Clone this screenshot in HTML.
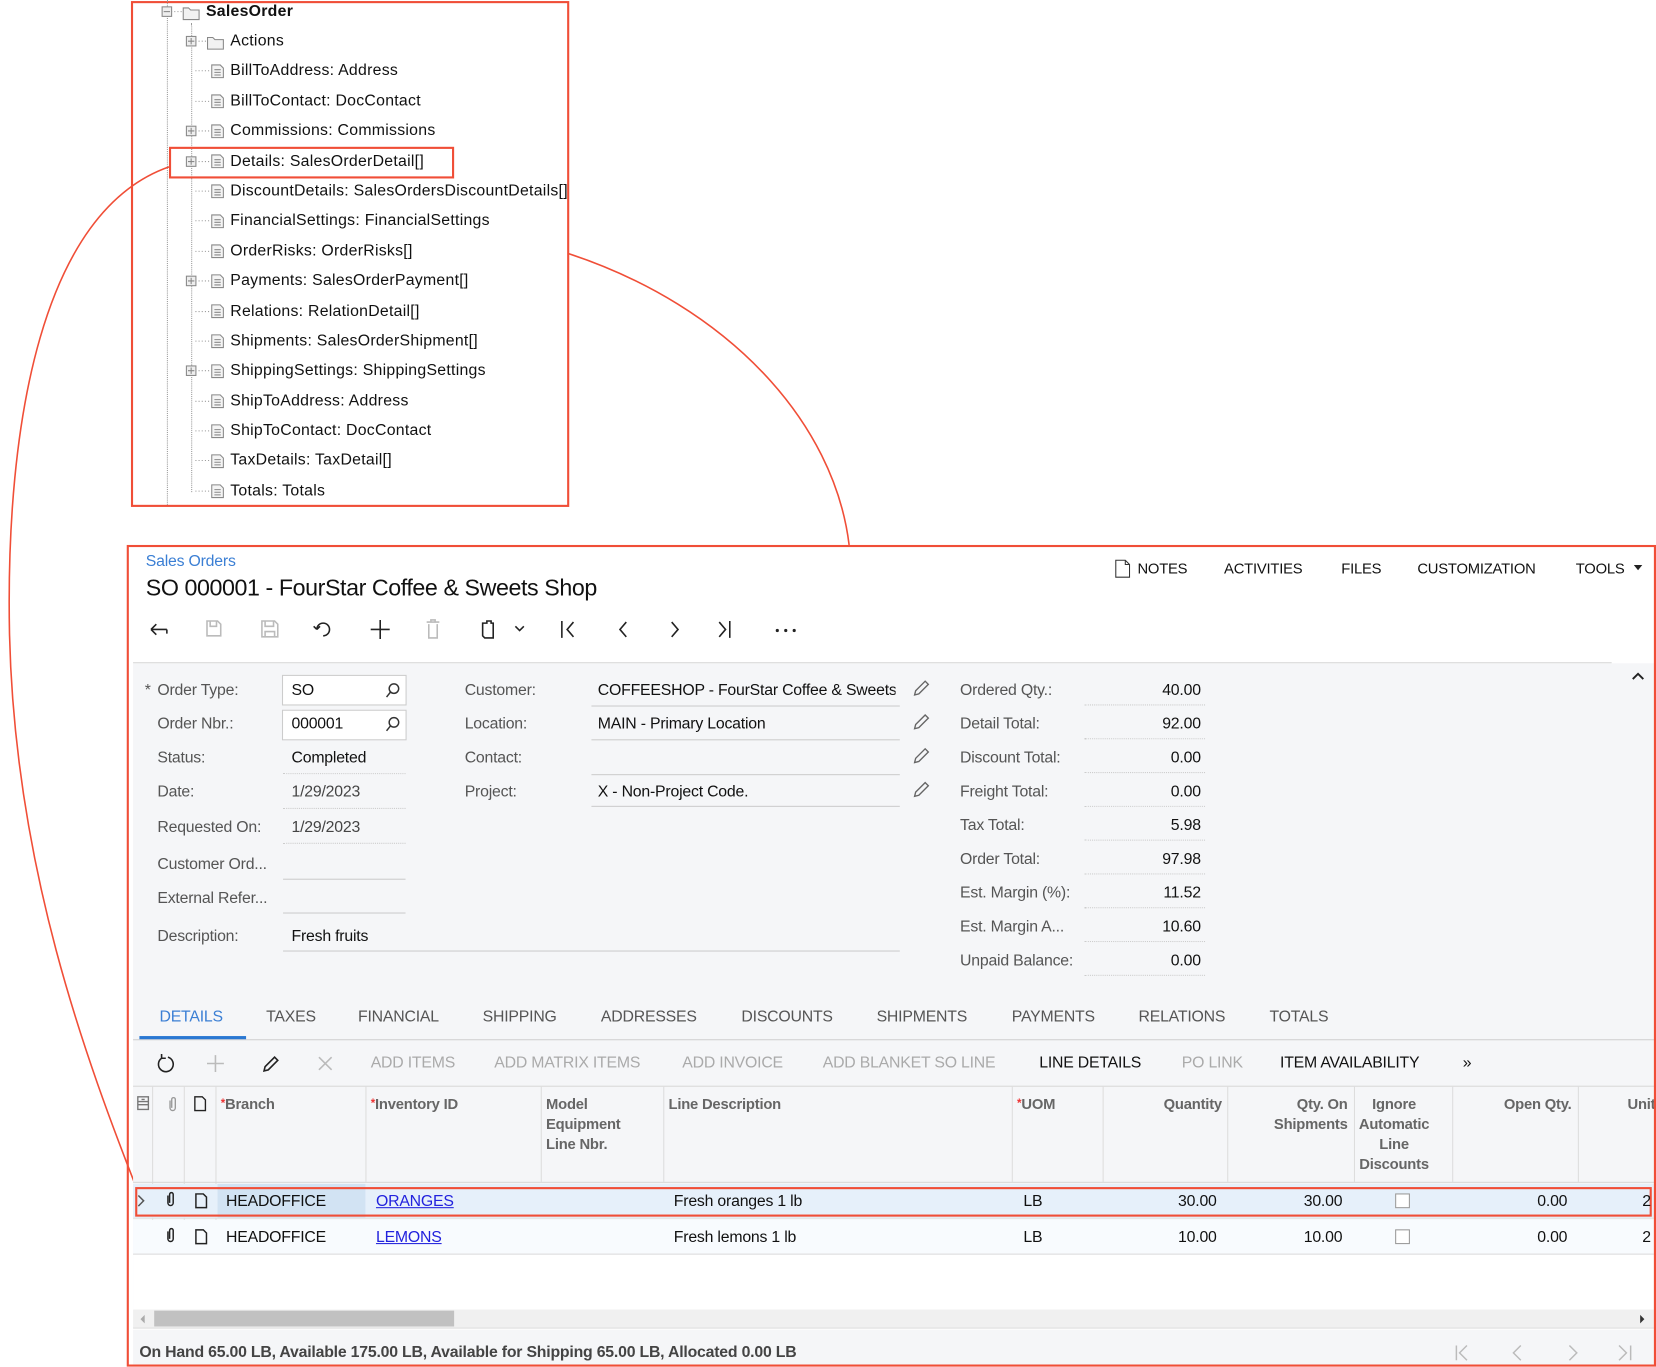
<!DOCTYPE html>
<html><head><meta charset="utf-8">
<style>
html,body{margin:0;padding:0;background:#fff;width:1656px;height:1366px;overflow:hidden}
#w{position:absolute;left:0;top:0;width:1568px;height:1294px;transform:scale(1.05612);transform-origin:0 0;font-family:"Liberation Sans",sans-serif;color:#111}
.t{position:absolute;line-height:18px;font-size:15px;white-space:nowrap;letter-spacing:-0.2px}
.tr{letter-spacing:0.25px}
.a{position:absolute}
.lb{color:#555}
.g{color:#aaa}
.h{font-weight:bold;color:#666;font-size:14px;line-height:19px}
.r{text-align:right}
.dl{position:absolute;border-bottom:1px dotted #ccc}
.ul{position:absolute;border-bottom:1px solid #ccc}
.vl{position:absolute;width:1px;background:#ddd}
</style></head><body><div id="w">

<!-- TREE -->
<div class="a" style="left:124px;top:1px;width:411px;height:475px;border:2px solid #f04e37"></div>
<div class="a" style="left:158px;top:0;height:478px;border-left:1px dotted #999"></div>
<div class="a" style="left:181px;top:22px;height:444px;border-left:1px dotted #999"></div>
<div class="a" style="left:160px;top:139px;width:266px;height:26px;border:2px solid #f04e37"></div>

<svg class="a" style="left:0;top:0" width="1568" height="1294">
<g fill="none" stroke="#f04e37" stroke-width="1.5">
<path d="M160,158 C 40,200 5,400 9,600 C 14,820 80,1000 134,1137"/>
<path d="M538,240 C 690,290 790,400 804,516"/>
</g>
<g stroke="#999" stroke-dasharray="1,2" stroke-width="1">
<path d="M162,11H172M185,39H196M185,67H198M185,96H198M185,124H198M185,153H198M185,181H198M185,209H198M185,238H198M185,266H198M185,295H198M185,323H198M185,351H198M185,380H198M185,408H198M185,436H198M185,465H198"/>
</g>
<g fill="#eee" stroke="#888">
<rect x="153.5" y="6.5" width="9" height="9"/><path d="M155,11H161" />
<rect x="176.5" y="34.5" width="9" height="9"/><path d="M178,39H184M181,36V42"/>
<rect x="176.5" y="119.5" width="9" height="9"/><path d="M178,124H184M181,121V127"/>
<rect x="176.5" y="148.5" width="9" height="9"/><path d="M178,153H184M181,150V156"/>
<rect x="176.5" y="261.5" width="9" height="9"/><path d="M178,266H184M181,263V269"/>
<rect x="176.5" y="346.5" width="9" height="9"/><path d="M178,351H184M181,348V354"/>
</g>
<g fill="#f2f2f2" stroke="#888">
<path d="M173.5,7.5h5l2,2h8v9h-15z"/>
<path d="M196.5,35.5h5l2,2h8v9h-15z"/>
</g>
<g fill="#f4f4f4" stroke="#888" id="docs">
<path d="M200.5,61.5h8l3,3v9h-11z M203,66h6M203,68.5h6M203,71h6"/>
</g>
<use href="#docs" y="28.4"/><use href="#docs" y="56.8"/><use href="#docs" y="85.2"/><use href="#docs" y="113.6"/><use href="#docs" y="142"/><use href="#docs" y="170.4"/><use href="#docs" y="198.8"/><use href="#docs" y="227.2"/><use href="#docs" y="255.6"/><use href="#docs" y="284"/><use href="#docs" y="312.4"/><use href="#docs" y="340.8"/><use href="#docs" y="369.2"/><use href="#docs" y="397.6"/>
</svg>

<div class="t tr" style="left:195px;top:2px;font-weight:bold">SalesOrder</div>
<div class="t tr" style="left:218px;top:30px">Actions</div>
<div class="t tr" style="left:218px;top:58px">BillToAddress: Address</div>
<div class="t tr" style="left:218px;top:87px">BillToContact: DocContact</div>
<div class="t tr" style="left:218px;top:115px">Commissions: Commissions</div>
<div class="t tr" style="left:218px;top:144px">Details: SalesOrderDetail[]</div>
<div class="t tr" style="left:218px;top:172px">DiscountDetails: SalesOrdersDiscountDetails[]</div>
<div class="t tr" style="left:218px;top:200px">FinancialSettings: FinancialSettings</div>
<div class="t tr" style="left:218px;top:229px">OrderRisks: OrderRisks[]</div>
<div class="t tr" style="left:218px;top:257px">Payments: SalesOrderPayment[]</div>
<div class="t tr" style="left:218px;top:286px">Relations: RelationDetail[]</div>
<div class="t tr" style="left:218px;top:314px">Shipments: SalesOrderShipment[]</div>
<div class="t tr" style="left:218px;top:342px">ShippingSettings: ShippingSettings</div>
<div class="t tr" style="left:218px;top:371px">ShipToAddress: Address</div>
<div class="t tr" style="left:218px;top:399px">ShipToContact: DocContact</div>
<div class="t tr" style="left:218px;top:427px">TaxDetails: TaxDetail[]</div>
<div class="t tr" style="left:218px;top:456px">Totals: Totals</div>

<!-- MAIN PANEL -->
<div class="a" style="left:126px;top:628px;width:1440px;height:612px;background:#f5f6f8"></div>
<div class="a" style="left:126px;top:1188px;width:1440px;height:52px;background:#fff"></div>
<div class="a" style="left:126px;top:627px;width:1400px;height:1px;background:#d8d8d8"></div>
<div class="a" style="left:126px;top:1259px;width:1440px;height:33px;background:#f5f6f8"></div>

<div class="t" style="left:138px;top:523px;color:#3b7fd4">Sales Orders</div>
<div class="t" style="left:138px;top:544px;font-size:22px;line-height:26px;letter-spacing:-0.4px">SO 000001 - FourStar Coffee &amp; Sweets Shop</div>

<svg class="a" style="left:1055px;top:529px" width="16" height="19"><path d="M1.5,1.5h9l4,4v12h-13z M10.5,1.5v4h4" fill="#fff" stroke="#333"/></svg>
<div class="t" style="left:1077px;top:529px;font-size:14px">NOTES</div>
<div class="t" style="left:1159px;top:529px;font-size:14px">ACTIVITIES</div>
<div class="t" style="left:1270px;top:529px;font-size:14px">FILES</div>
<div class="t" style="left:1342px;top:529px;font-size:14px">CUSTOMIZATION</div>
<div class="t" style="left:1492px;top:529px;font-size:14px">TOOLS</div>
<svg class="a" style="left:1547px;top:535px" width="10" height="6"><path d="M0,0H8L4,5z" fill="#222"/></svg>

<!-- toolbar icons -->
<svg class="a" style="left:130px;top:580px" width="650" height="32" fill="none" stroke-width="1.5">
<g stroke="#222"><path d="M13,16H28M13,16l5,-5M13,16l5,5M28,16v4"/></g>
<g stroke="#bbb"><path d="M66,8h10l3,3v11h-13z M69,8v5h6v-5"/><path d="M118,8h12l3,3v12h-15z M121,8v5h8v-5 M121,23v-5h9v5"/><path d="M274,9h12M278,9v-2h4v2 M276,11v13h8v-13"/></g>
<g stroke="#222"><path d="M170,16a6,6 0 1 1 6,6 M170,16l-3,-3M170,16l3,-3"/><path d="M230,7v18M221,16h18"/><path d="M327,10h4v-2h4v2h2v14h-8l-2,-2z"/><path d="M358,13l4,4l4,-4"/><path d="M402,8v16M413,9l-6,7l6,7"/><path d="M463,9l-6,7l6,7"/><path d="M506,9l6,7l-6,7"/><path d="M551,9l6,7l-6,7M561,8v16"/></g>
<g fill="#222" stroke="none"><circle cx="606" cy="17" r="1.5"/><circle cx="614" cy="17" r="1.5"/><circle cx="622" cy="17" r="1.5"/></g>
</svg>
<svg class="a" style="left:1544px;top:636px" width="14" height="10"><path d="M2,7l5,-5l5,5" fill="none" stroke="#222" stroke-width="1.8"/></svg>

<!-- form left -->
<div class="t" style="left:137px;top:645px;color:#555">*</div>
<div class="t lb" style="left:149px;top:645px">Order Type:</div>
<div class="t lb" style="left:149px;top:677px">Order Nbr.:</div>
<div class="t lb" style="left:149px;top:709px">Status:</div>
<div class="t lb" style="left:149px;top:741px">Date:</div>
<div class="t lb" style="left:149px;top:775px">Requested On:</div>
<div class="t lb" style="left:149px;top:810px">Customer Ord...</div>
<div class="t lb" style="left:149px;top:842px">External Refer...</div>
<div class="t lb" style="left:149px;top:878px">Description:</div>
<div class="a" style="left:267px;top:639px;width:116px;height:27px;background:#fff;border:1px solid #ccc"></div>
<div class="a" style="left:267px;top:672px;width:116px;height:27px;background:#fff;border:1px solid #ccc"></div>
<svg class="a" style="left:364px;top:645px" width="16" height="50" fill="none" stroke="#333" stroke-width="1.4"><circle cx="9" cy="7" r="4.5"/><path d="M6,10l-4,5"/><circle cx="9" cy="39" r="4.5"/><path d="M6,42l-4,5"/></svg>
<div class="t" style="left:276px;top:645px">SO</div>
<div class="t" style="left:276px;top:677px">000001</div>
<div class="t" style="left:276px;top:709px">Completed</div>
<div class="t" style="left:276px;top:741px;color:#444">1/29/2023</div>
<div class="t" style="left:276px;top:775px;color:#444">1/29/2023</div>
<div class="t" style="left:276px;top:878px">Fresh fruits</div>
<div class="dl" style="left:268px;top:732px;width:116px"></div>
<div class="dl" style="left:268px;top:765px;width:116px"></div>
<div class="dl" style="left:268px;top:798px;width:116px"></div>
<div class="ul" style="left:268px;top:832px;width:116px"></div>
<div class="ul" style="left:268px;top:864px;width:116px"></div>
<div class="ul" style="left:268px;top:900px;width:584px"></div>

<!-- form middle -->
<div class="t lb" style="left:440px;top:645px">Customer:</div>
<div class="t lb" style="left:440px;top:677px">Location:</div>
<div class="t lb" style="left:440px;top:709px">Contact:</div>
<div class="t lb" style="left:440px;top:741px">Project:</div>
<div class="t" style="left:566px;top:645px;width:282px;overflow:hidden">COFFEESHOP - FourStar Coffee &amp; Sweets Shop</div>
<div class="t" style="left:566px;top:677px">MAIN - Primary Location</div>
<div class="t" style="left:566px;top:741px">X - Non-Project Code.</div>
<div class="ul" style="left:560px;top:668px;width:292px"></div>
<div class="ul" style="left:560px;top:700px;width:292px"></div>
<div class="ul" style="left:560px;top:733px;width:292px"></div>
<div class="ul" style="left:560px;top:763px;width:292px"></div>
<svg class="a" style="left:863px;top:643px" width="18" height="116" fill="none" stroke="#666" stroke-width="1.3">
<path d="M3,15l1,-4l9,-9l3,3l-9,9z"/><path d="M3,47l1,-4l9,-9l3,3l-9,9z"/><path d="M3,79l1,-4l9,-9l3,3l-9,9z"/><path d="M3,111l1,-4l9,-9l3,3l-9,9z"/></svg>

<!-- form right -->
<div class="t lb" style="left:909px;top:645px">Ordered Qty.:</div>
<div class="t lb" style="left:909px;top:677px">Detail Total:</div>
<div class="t lb" style="left:909px;top:709px">Discount Total:</div>
<div class="t lb" style="left:909px;top:741px">Freight Total:</div>
<div class="t lb" style="left:909px;top:773px">Tax Total:</div>
<div class="t lb" style="left:909px;top:805px">Order Total:</div>
<div class="t lb" style="left:909px;top:837px">Est. Margin (%):</div>
<div class="t lb" style="left:909px;top:869px">Est. Margin A...</div>
<div class="t lb" style="left:909px;top:901px">Unpaid Balance:</div>
<div class="t r" style="left:1037px;width:100px;top:645px">40.00</div>
<div class="t r" style="left:1037px;width:100px;top:677px">92.00</div>
<div class="t r" style="left:1037px;width:100px;top:709px">0.00</div>
<div class="t r" style="left:1037px;width:100px;top:741px">0.00</div>
<div class="t r" style="left:1037px;width:100px;top:773px">5.98</div>
<div class="t r" style="left:1037px;width:100px;top:805px">97.98</div>
<div class="t r" style="left:1037px;width:100px;top:837px">11.52</div>
<div class="t r" style="left:1037px;width:100px;top:869px">10.60</div>
<div class="t r" style="left:1037px;width:100px;top:901px">0.00</div>
<div class="dl" style="left:1027px;top:667px;width:114px"></div>
<div class="dl" style="left:1027px;top:699px;width:114px"></div>
<div class="dl" style="left:1027px;top:731px;width:114px"></div>
<div class="dl" style="left:1027px;top:763px;width:114px"></div>
<div class="dl" style="left:1027px;top:795px;width:114px"></div>
<div class="dl" style="left:1027px;top:827px;width:114px"></div>
<div class="dl" style="left:1027px;top:859px;width:114px"></div>
<div class="dl" style="left:1027px;top:891px;width:114px"></div>
<div class="dl" style="left:1027px;top:923px;width:114px"></div>

<!-- tabs -->
<div class="t" style="left:151px;top:954px;color:#3b7fd4">DETAILS</div>
<div class="t lb" style="left:252px;top:954px">TAXES</div>
<div class="t lb" style="left:339px;top:954px">FINANCIAL</div>
<div class="t lb" style="left:457px;top:954px">SHIPPING</div>
<div class="t lb" style="left:569px;top:954px">ADDRESSES</div>
<div class="t lb" style="left:702px;top:954px">DISCOUNTS</div>
<div class="t lb" style="left:830px;top:954px">SHIPMENTS</div>
<div class="t lb" style="left:958px;top:954px">PAYMENTS</div>
<div class="t lb" style="left:1078px;top:954px">RELATIONS</div>
<div class="t lb" style="left:1202px;top:954px">TOTALS</div>
<div class="a" style="left:126px;top:984px;width:1440px;height:1px;background:#d0d0d0"></div>
<div class="a" style="left:132px;top:981px;width:101px;height:3px;background:#2a78d2"></div>

<!-- grid toolbar -->
<svg class="a" style="left:140px;top:994px" width="190" height="26" fill="none" stroke-width="1.5">
<path d="M19,7a7,7 0 1 1 -6,1 M13,4v4h4" stroke="#222"/>
<path d="M64,5v16M56,13h16" stroke="#bbb"/>
<path d="M110,20l1,-4l9,-9l3,3l-9,9z" stroke="#222"/>
<path d="M162,7l12,12M174,7l-12,12" stroke="#bbb"/>
</svg>
<div class="t g" style="left:351px;top:998px">ADD ITEMS</div>
<div class="t g" style="left:468px;top:998px">ADD MATRIX ITEMS</div>
<div class="t g" style="left:646px;top:998px">ADD INVOICE</div>
<div class="t g" style="left:779px;top:998px">ADD BLANKET SO LINE</div>
<div class="t" style="left:984px;top:998px">LINE DETAILS</div>
<div class="t g" style="left:1119px;top:998px">PO LINK</div>
<div class="t" style="left:1212px;top:998px">ITEM AVAILABILITY</div>
<div class="t" style="left:1385px;top:998px">»</div>
<div class="a" style="left:126px;top:1028px;width:1440px;height:1px;background:#d8d8d8"></div>

<!-- grid header -->
<div class="vl" style="left:144px;top:1029px;height:158px"></div>
<div class="vl" style="left:174px;top:1029px;height:158px"></div>
<div class="vl" style="left:204px;top:1029px;height:158px"></div>
<div class="vl" style="left:346px;top:1029px;height:90px"></div>
<div class="vl" style="left:512px;top:1029px;height:90px"></div>
<div class="vl" style="left:628px;top:1029px;height:90px"></div>
<div class="vl" style="left:958px;top:1029px;height:90px"></div>
<div class="vl" style="left:1044px;top:1029px;height:90px"></div>
<div class="vl" style="left:1162px;top:1029px;height:90px"></div>
<div class="vl" style="left:1282px;top:1029px;height:90px"></div>
<div class="vl" style="left:1375px;top:1029px;height:90px"></div>
<div class="vl" style="left:1494px;top:1029px;height:90px"></div>
<div class="a" style="left:126px;top:1119px;width:1440px;height:1px;background:#d8d8d8"></div>
<svg class="a" style="left:128px;top:1036px" width="70" height="18" fill="none" stroke-width="1.3">
<path d="M2.5,2.5h10v12h-10z M2.5,7h10M2.5,10h10M6,5h3" stroke="#777"/>
<path d="M33,6v7a2.5,2.5 0 0 0 5,0v-8a1.7,1.7 0 0 0 -3.4,0v8" stroke="#999"/>
<path d="M56.5,2.5h7l3,3v10h-10z" stroke="#222"/>
</svg>
<div class="t h" style="left:209px;top:1036px"><span style="color:#e33;font-size:11px;vertical-align:top">*</span>Branch</div>
<div class="t h" style="left:351px;top:1036px"><span style="color:#e33;font-size:11px;vertical-align:top">*</span>Inventory ID</div>
<div class="t h" style="left:517px;top:1036px">Model<br>Equipment<br>Line Nbr.</div>
<div class="t h" style="left:633px;top:1036px">Line Description</div>
<div class="t h" style="left:963px;top:1036px"><span style="color:#e33;font-size:11px;vertical-align:top">*</span>UOM</div>
<div class="t h r" style="left:1050px;width:107px;top:1036px">Quantity</div>
<div class="t h r" style="left:1170px;width:106px;top:1036px">Qty. On<br>Shipments</div>
<div class="t h" style="left:1284px;width:72px;top:1036px;text-align:center">Ignore<br>Automatic<br>Line<br>Discounts</div>
<div class="t h r" style="left:1380px;width:108px;top:1036px">Open Qty.</div>
<div class="t h" style="left:1541px;top:1036px">Unit</div>

<!-- rows -->
<div class="a" style="left:126px;top:1121px;width:1440px;height:32px;background:#e6f0fa"></div>
<div class="a" style="left:206px;top:1121px;width:140px;height:32px;background:#d2e3f3"></div>
<div class="a" style="left:126px;top:1155px;width:1440px;height:32px;background:#f8fbfe"></div>
<div class="a" style="left:126px;top:1153px;width:1440px;height:1px;background:#e0e0e0"></div>
<div class="a" style="left:126px;top:1187px;width:1440px;height:1px;background:#ddd"></div>
<div class="a" style="left:128px;top:1124px;width:1432px;height:24px;border:2px solid #f04e37"></div>
<svg class="a" style="left:128px;top:1126px" width="75" height="56" fill="none" stroke-width="1.4">
<path d="M3,6l5,5l-5,5" stroke="#555"/>
<path d="M31,6v7a2.5,2.5 0 0 0 5,0v-8a1.7,1.7 0 0 0 -3.4,0v8" stroke="#222"/>
<path d="M57.5,4.5h7l3,3v10h-10z" stroke="#222"/>
<path d="M31,40v7a2.5,2.5 0 0 0 5,0v-8a1.7,1.7 0 0 0 -3.4,0v8" stroke="#222"/>
<path d="M57.5,38.5h7l3,3v10h-10z" stroke="#222"/>
</svg>
<div class="t" style="left:214px;top:1129px">HEADOFFICE</div>
<div class="t" style="left:356px;top:1129px;color:#2222dd;text-decoration:underline">ORANGES</div>
<div class="t" style="left:638px;top:1129px">Fresh oranges 1 lb</div>
<div class="t" style="left:969px;top:1129px">LB</div>
<div class="t r" style="left:1050px;width:102px;top:1129px">30.00</div>
<div class="t r" style="left:1170px;width:101px;top:1129px">30.00</div>
<div class="a" style="left:1321px;top:1130px;width:12px;height:12px;border:1px solid #999;background:#fff"></div>
<div class="t r" style="left:1380px;width:104px;top:1129px">0.00</div>
<div class="t" style="left:1555px;top:1129px">2</div>
<div class="t" style="left:214px;top:1163px">HEADOFFICE</div>
<div class="t" style="left:356px;top:1163px;color:#2222dd;text-decoration:underline">LEMONS</div>
<div class="t" style="left:638px;top:1163px">Fresh lemons 1 lb</div>
<div class="t" style="left:969px;top:1163px">LB</div>
<div class="t r" style="left:1050px;width:102px;top:1163px">10.00</div>
<div class="t r" style="left:1170px;width:101px;top:1163px">10.00</div>
<div class="a" style="left:1321px;top:1164px;width:12px;height:12px;border:1px solid #999;background:#fff"></div>
<div class="t r" style="left:1380px;width:104px;top:1163px">0.00</div>
<div class="t" style="left:1555px;top:1163px">2</div>

<!-- scrollbar -->
<div class="a" style="left:126px;top:1240px;width:1440px;height:17px;background:#f0f0f0"></div>
<div class="a" style="left:146px;top:1241px;width:284px;height:15px;background:#c1c1c1"></div>
<svg class="a" style="left:130px;top:1243px" width="1432" height="12"><path d="M7,2l-4,4l4,4z" fill="#aaa"/><path d="M1423,2l4,4l-4,4z" fill="#333"/></svg>
<div class="a" style="left:126px;top:1257px;width:1440px;height:1px;background:#ddd"></div>

<div class="t" style="left:132px;top:1272px;font-weight:bold;color:#444">On Hand 65.00 LB, Available 175.00 LB, Available for Shipping 65.00 LB, Allocated 0.00 LB</div>
<svg class="a" style="left:1370px;top:1272px" width="180" height="18" fill="none" stroke="#bbb" stroke-width="1.4">
<path d="M9,2v14M19,2l-7,7l7,7"/><path d="M70,2l-7,7l7,7"/><path d="M116,2l7,7l-7,7"/><path d="M163,2l7,7l-7,7M174,2v14"/>
</svg>

<div class="a" style="left:120px;top:516px;width:1444px;height:774px;border:2px solid #f04e37"></div>
</div></body></html>
